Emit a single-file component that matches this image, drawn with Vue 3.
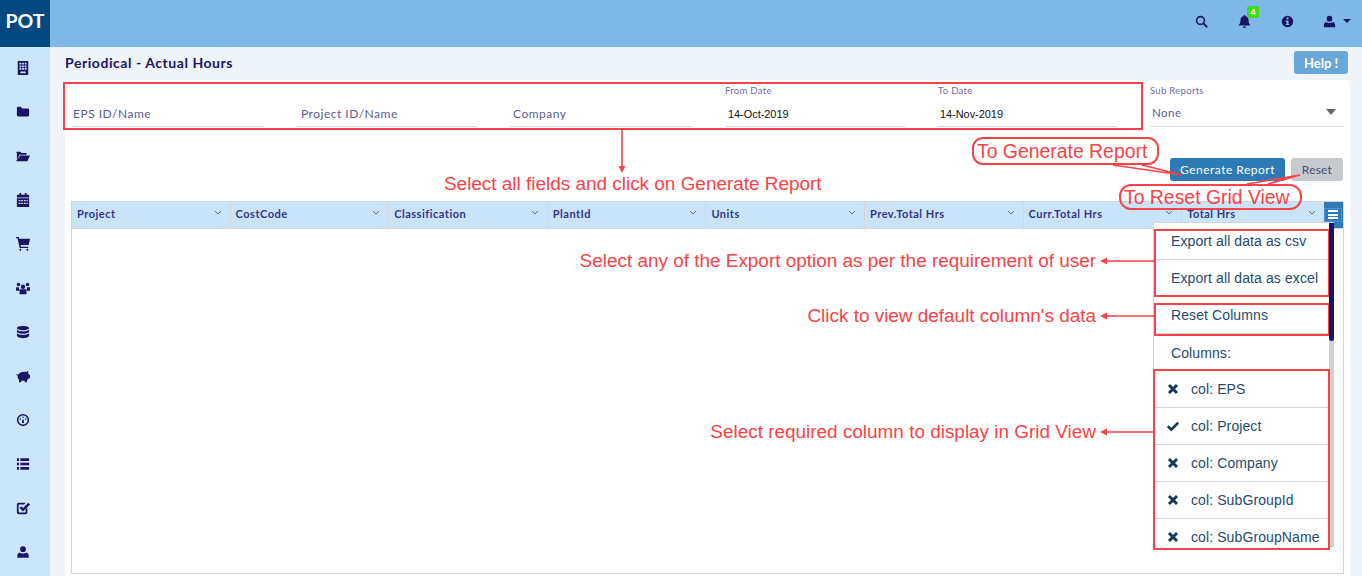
<script setup>
const sideIcons = [
  { d: 'M2 0h12v16H2zM4 2v2h2V2zm3 0v2h2V2zm3 0v2h2V2zM4 5v2h2V5zm3 0v2h2V5zm3 0v2h2V5zM4 8v2h2V8zm3 0v2h2V8zm3 0v2h2V8zM5 12v2h6v-2z' },
  { d: 'M1 3.5A1.5 1.5 0 0 1 2.500 2h3l1.500 2h6.500A1.500 1.500 0 0 1 15 5.500v6a1.500 1.500 0 0 1-1.500 1.500h-11A1.500 1.500 0 0 1 1 11.500z' },
  { d: 'M0 4a1 1 0 0 1 1-1h4l1.500 1.500H12V6.500H4L1 12V4zM4.500 7.500H16l-3 6.500H0z' },
  { d: 'M1 2h3V0h2v2h4V0h2v2h3v3H1zM1 6h14v10H1zm2 2v1.500h2V8zm3 0v1.500h2V8zm3 0v1.500h2V8zm3 0v1.500h1.500V8zM3 11v1.500h2V11zm3 0v1.500h2V11zm3 0v1.500h2V11zm3 0v1.500h1.500V11z' },
  { d: 'M0 0h3l.6 2H16l-1.500 7H5.200l.4 2H14v1.500H4.200L1.800 1.500H0zM5 13.500a1 1 0 1 0 .01 0zm8 0a1 1 0 1 0 .01 0z' },
  { d: 'M8 4a2.500 2.500 0 1 1 0 5 2.500 2.500 0 0 1 0-5zM2.800 2a2 2 0 1 1 0 4 2 2 0 0 1 0-4zm10.400 0a2 2 0 1 1 0 4 2 2 0 0 1 0-4zM0 7h3.500v4H0zm12.500 0H16v4h-3.500zM4 9.500h8V15H4z' },
  { d: 'M8 1c3.800 0 7 1 7 2.500S11.800 6 8 6 1 5 1 3.500 4.200 1 8 1zM1 5.500C2.500 7 5 7.300 8 7.300s5.500-.3 7-1.800v2C15 9 11.800 10 8 10S1 9 1 7.500zm0 4C2.500 11 5 11.300 8 11.300s5.500-.3 7-1.800v2.500C15 13.500 11.800 15 8 15s-7-1.500-7-3z' },
  { d: 'M3 6c1-2 3.500-3 6-3 1 0 2 .2 2.800.5L14 2v3.500L16 7v3.500h-1.500L12.500 13v2h-2.500v-1.500H6V15H3.500v-2.500C2 11 1.600 9 2 7.500 1 7.500 0 7 0 6c.8.500 2 .5 3 0z' },
  { d: 'M8 1a7 7 0 1 1 0 14A7 7 0 0 1 8 1zm0 1.800a5.200 5.200 0 1 0 0 10.400A5.200 5.200 0 0 0 8 2.800zM8 4a.8.8 0 1 1 0 1.600A.8.8 0 0 1 8 4zM5 6a.8.8 0 1 1 0 1.600A.8.8 0 0 1 5 6zm6 0a.8.8 0 1 1 0 1.600A.8.8 0 0 1 11 6zM7.500 7h1l.5 2.500A1.300 1.300 0 1 1 7 9.500z' },
  { d: 'M1 1.500h2.500v3H1zm4 0h10v3H5zM1 6.500h2.500v3H1zm4 0h10v3H5zM1 11.500h2.500v3H1zm4 0h10v3H5z' },
  { d: 'M3 2h8l-1.800 2H3.500a.5.5 0 0 0-.5.500v8a.5.5 0 0 0 .5.500h7a.5.5 0 0 0 .5-.5V9.500l2-2V13a2 2 0 0 1-2 2H3a2 2 0 0 1-2-2V4a2 2 0 0 1 2-2zm11 0l2 2-8 8-4-4 2-2 2 2z' },
  { d: 'M8 1.500a3.300 3.300 0 1 1 0 6.600 3.300 3.300 0 0 1 0-6.600zM3.800 8.500c1 .8 2.600 1.200 4.200 1.200s3.200-.4 4.200-1.200c1.200.6 2.300 2 2.300 4v2h-13v-2c0-2 1.100-3.400 2.300-4z' }
]

const fields = [
  { text: 'EPS ID/Name', cls: 'p1' },
  { text: 'Project ID/Name', cls: 'p4' },
  { text: 'Company', cls: 'p3' },
  { label: 'From Date', value: '14-Oct-2019' },
  { label: 'To Date', value: '14-Nov-2019' }
]

const columns = ['Project', 'CostCode', 'Classification', 'PlantId', 'Units', 'Prev.Total Hrs', 'Curr.Total Hrs', 'Total Hrs']

const menuRows = [
  { text: 'Export all data as csv', cls: 'lined' },
  { text: 'Export all data as excel', cls: 'lined' },
  { text: 'Reset Columns', cls: 'lined' },
  { text: 'Columns:', cls: '' },
  { text: 'col: EPS', icon: 'x' },
  { text: 'col: Project', icon: 'check' },
  { text: 'col: Company', icon: 'x' },
  { text: 'col: SubGroupId', icon: 'x' },
  { text: 'col: SubGroupName', icon: 'x' }
]

const notes = [
  { text: 'Select all fields and click on Generate Report', cls: 'n-fields' },
  { text: 'Select any of the Export option as per the requirement of user', cls: 'n-export' },
  { text: "Click to view default column's data", cls: 'n-reset' },
  { text: 'Select required column to display in Grid View', cls: 'n-cols' }
]
</script>

<template>
  <div class="shell">
    <header class="topbar">
      <div class="logo">POT</div>
      <div class="top-actions">
        <svg class="top-icon" viewBox="0 0 16 16"><circle cx="6.800" cy="6.800" r="4.800" fill="none" stroke="#1a1464" stroke-width="2" /><path d="M10.300 10.300L15 15" stroke="#1a1464" stroke-width="2.400" /></svg>
        <span class="bell">
          <svg class="top-icon" viewBox="0 0 16 16"><path fill="#1a1464" d="M8 0a1 1 0 0 1 1 1.200C11.500 1.800 13 3.800 13 6.500c0 3.500 1 5 2.500 6.500h-15C2 11.500 3 10 3 6.500 3 3.800 4.500 1.800 7 1.200A1 1 0 0 1 8 0zM6 14h4a2 2 0 0 1-4 0z" /></svg>
          <span class="badge">4</span>
        </span>
        <svg class="top-icon info" viewBox="0 0 16 16"><path fill="#1a1464" fill-rule="evenodd" d="M8 1a7 7 0 1 1 0 14A7 7 0 0 1 8 1zM6.800 3v2.200h2.400V3zM5.800 6.800v1.400h1V11h-1v1.400h4.400V11h-1V6.800z" /></svg>
        <span class="user">
          <svg class="top-icon" viewBox="0 0 16 16"><path fill="#1a1464" d="M8 1a3.500 3.500 0 1 1 0 7 3.500 3.500 0 0 1 0-7zM3.500 8.500C4.700 9.400 6.200 9.800 8 9.800s3.300-.4 4.500-1.300c1.300.6 2.500 2 2.500 4.200V15H1v-2.300c0-2.200 1.200-3.600 2.500-4.200z" /></svg>
          <i class="user-caret"></i>
        </span>
      </div>
    </header>

    <div class="below">
      <nav class="sidebar">
        <div v-for="(icon, i) in sideIcons" :key="i" class="side-item">
          <svg viewBox="0 0 16 16" class="side-icon"><path fill="#1a1464" fill-rule="evenodd" :d="icon.d" /></svg>
        </div>
      </nav>

      <main class="content">
        <div class="title-row">
          <h1>Periodical - Actual Hours</h1>
          <button class="help">Help !</button>
        </div>

        <section class="card">
          <div class="filters">
            <div v-for="f in fields" :key="f.text || f.label" class="field">
              <span class="small-label">{{ f.label }}</span>
              <span v-if="f.text" class="field-text" :class="f.cls">{{ f.text }}</span>
              <span v-else class="field-date">{{ f.value }}</span>
            </div>
            <div class="field sub">
              <span class="small-label">Sub Reports</span>
              <span class="field-text none">None <i class="select-caret"></i></span>
            </div>
          </div>

          <div class="actions">
            <button class="generate">Generate Report</button>
            <button class="reset">Reset</button>
          </div>

          <div class="grid">
            <div class="grid-head">
              <div v-for="c in columns" :key="c" class="col">
                <span>{{ c }}</span>
                <svg class="chev" viewBox="0 0 8 5"><path d="M1 1l3 3 3-3" fill="none" stroke="#5f6f9f" stroke-width="1" /></svg>
              </div>
              <div class="menu-btn"><span class="burger"><i></i><i></i><i></i></span></div>
            </div>
            <div class="grid-body"></div>

            <div class="menu">
              <div v-for="r in menuRows" :key="r.text" class="menu-row" :class="[r.cls, { coln: r.icon }]">
                <svg v-if="r.icon === 'x'" class="mark" viewBox="0 0 12 12"><path d="M2 2l8 8M10 2l-8 8" stroke="#17375e" stroke-width="3" /></svg>
                <svg v-if="r.icon === 'check'" class="mark" viewBox="0 0 12 12"><path d="M0.800 6.200l3.400 3.400 7-7" fill="none" stroke="#17375e" stroke-width="2.600" /></svg>
                {{ r.text }}
              </div>
              <div class="thumb"></div>
            </div>
          </div>
        </section>
      </main>
    </div>

    <div class="overlay">
      <svg class="lines" width="1362" height="576" viewBox="0 0 1362 576">
        <g fill="none" stroke="#f84348" stroke-width="1.600">
          <path d="M622 128V168" />
          <path d="M1104 261H1154M1104 316H1154M1104 432H1153" />
          <path d="M1113 165L1182 175L1142 165" />
          <path d="M1247 184L1300 175L1268 184" />
        </g>
        <g fill="#f84348">
          <path d="M618.500 166h7L622 173z" />
          <path d="M1100 261l7-3.500v7zM1100 316l7-3.500v7zM1100 432l7-3.500v7z" />
        </g>
      </svg>
      <div class="rbox b-filters"></div>
      <div class="rbox b-export"></div>
      <div class="rbox b-reset"></div>
      <div class="rbox b-cols"></div>
      <div class="callout c-gen">To Generate Report</div>
      <div class="callout c-res">To Reset Grid View</div>
      <div v-for="n in notes" :key="n.cls" class="note" :class="n.cls">{{ n.text }}</div>
    </div>
  </div>
</template>

<style>
html, body { margin: 0; overflow: hidden; }
</style>

<style scoped>
.shell {
  position: relative;
  width: 1362px;
  height: 576px;
  overflow: hidden;
  font-family: Lato, "Liberation Sans", sans-serif;
  background: #eff4f8;
}
.topbar {
  display: flex;
  justify-content: space-between;
  height: 47px;
  background: #7db8e8;
}
.logo {
  width: 50px;
  background: #044a80;
  color: #fff;
  font-size: 19.500px;
  font-weight: 700;
  line-height: 42px;
  text-align: center;
}
.top-actions {
  display: flex;
  align-items: center;
  padding: 0 11px 5px 0;
}
.top-icon { display: block; width: 13px; height: 13px; }
.top-actions > .top-icon:first-child { margin-right: 30px; }
.bell { position: relative; margin-right: 30px; }
.badge {
  position: absolute;
  left: 9px;
  top: -9px;
  width: 12px;
  height: 12px;
  background: #3ddc1f;
  border-radius: 2px;
  color: #fff;
  font: 700 9px/12px "Liberation Sans", sans-serif;
  text-align: center;
}
.info { margin-right: 29px; }
.user { display: flex; align-items: center; gap: 7px; }
.user-caret {
  border: 4px solid transparent;
  border-top: 4px solid #1a1464;
  border-bottom: 0;
}
.below { display: flex; height: 529px; }
.sidebar {
  flex: 0 0 50px;
  background: #cbe5f9;
}
.side-item {
  display: flex;
  align-items: center;
  justify-content: center;
  height: 44px;
  padding: 0 4px 2px 0;
  box-sizing: border-box;
}
.side-icon { width: 14px; height: 14px; display: block; }
.content { flex: 1; padding: 4px 12px 0 15px; min-width: 0; }
.title-row {
  display: flex;
  align-items: center;
  justify-content: space-between;
  height: 23px;
  padding-right: 2px;
}
h1 {
  margin: 0;
  font-size: 14px;
  font-weight: 700;
  color: #1a1464;
  letter-spacing: 0.55px;
}
.help {
  width: 54px;
  height: 23px;
  border: 0;
  border-radius: 3px;
  background: #69a7d8;
  color: #fff;
  font: 700 13px Lato, sans-serif;
  padding: 0;
}
.card {
  margin-top: 6px;
  background: #fff;
  border-radius: 5px;
  padding: 0 6px;
  height: 520px;
}
.filters {
  display: grid;
  grid-template-columns: 225px 213px 215px 213px 212px 194px;
  padding-top: 5px;
  margin-left: 1px;
}
.field {
  display: flex;
  flex-direction: column;
  height: 42px;
  box-sizing: border-box;
  margin-right: 33px;
  border-bottom: 1px solid #dcdcdc;
}
.field.sub { margin-right: 0; }
.small-label {
  height: 12px;
  font-size: 9.500px;
  line-height: 12px;
  color: #6f6ea8;
  letter-spacing: 0.3px;
}
.field-text {
  margin-top: 9px;
  font-size: 12px;
  line-height: 16px;
  color: #5b5a96;
  letter-spacing: 0.5px;
}
.p1 { padding-left: 1px; }
.p4 { padding-left: 4px; }
.p3 { padding-left: 3px; }
.none { display: flex; justify-content: space-between; align-items: center; padding-left: 2px; margin-top: 8px; font-size: 11.500px; }
.select-caret {
  border: 5px solid transparent;
  border-top: 6px solid #666;
  border-bottom: 0;
  margin-right: 8px;
  margin-top: -3px;
}
.field-date {
  margin-top: 9px;
  padding-left: 3px;
  font: 10.900px/16px "Liberation Sans", sans-serif;
  color: #111;
}
.field:nth-child(5) .field-date { padding-left: 2px; }
.actions {
  display: flex;
  justify-content: flex-end;
  gap: 6px;
  margin-top: 31px;
  padding-right: 1px;
}
.actions button {
  height: 23px;
  border: 0;
  border-radius: 3px;
  font: 12px Lato, sans-serif;
  padding: 0;
}
.generate { width: 115px; background: #2e7ab5; color: #fff; letter-spacing: 0.5px; }
.reset { width: 52px; background: #c6c9cd; color: #4b4b72; letter-spacing: 0.2px; }
.grid {
  position: relative;
  margin-top: 20px;
  height: 373px;
  box-sizing: border-box;
  border: 1px solid #d6d6d6;
  display: flex;
  flex-direction: column;
}
.grid-head {
  display: flex;
  height: 26px;
  flex: none;
  background: #c9e4f8;
  border-bottom: 1px solid #d6d6d6;
}
.col {
  flex: 0 0 158.600px;
  box-sizing: border-box;
  display: flex;
  align-items: center;
  justify-content: space-between;
  padding: 0 8px 3px 5px;
  border-right: 1px solid #d6d6d6;
  font-size: 11px;
  font-weight: 700;
  color: #34358a;
  letter-spacing: 0.5px;
}
.col:nth-child(8) { flex-basis: 141.800px; border-right: 0; }
.chev { width: 8px; height: 5px; margin-top: -3px; }
.menu-btn {
  flex: 1;
  min-width: 0;
  background: #2e7ab5;
  display: flex;
  align-items: center;
  justify-content: center;
}
.burger {
  box-sizing: border-box;
  width: 18px;
  height: 14px;
  display: flex;
  flex-direction: column;
  justify-content: center;
  gap: 1.500px;
  padding: 0 3px;
  border: 1px solid #4a90d9;
  margin-top: -1px;
}
.burger i { display: block; height: 2px; background: #fff; }
.grid-body { flex: 1; background: #fff; }
.menu {
  position: absolute;
  left: 1081px;
  top: 20px;
  width: 181px;
  height: 325px;
  box-sizing: border-box;
  overflow: hidden;
  background: #fff;
  border-left: 1px solid #d6d6d6;
  border-top: 1px solid #d6d6d6;
  font: 14px "Liberation Sans", sans-serif;
  letter-spacing: 0.1px;
  color: #264a6e;
}
.menu::after {
  content: "";
  position: absolute;
  right: 0;
  top: 0;
  bottom: 0;
  width: 5px;
  background: #d0d0d0;
}
.menu-row {
  height: 37px;
  box-sizing: border-box;
  padding-left: 17px;
  margin-right: 5px;
  display: flex;
  align-items: center;
  white-space: nowrap;
  flex: none;
}
.lined { border-bottom: 1px solid #d6d6d6; }
.coln { padding-left: 13px; gap: 12px; border-bottom: 1px solid #d6d6d6; }
.mark { width: 12px; height: 12px; flex: none; }
.thumb {
  position: absolute;
  z-index: 1;
  right: 0;
  top: 0;
  width: 5px;
  height: 118px;
  background: #1a1464;
  border-radius: 0 0 3px 3px;
}

.overlay { position: absolute; inset: 0; pointer-events: none; }
.lines { position: absolute; left: 0; top: 0; }
.rbox {
  position: absolute;
  box-sizing: border-box;
  border: 2px solid #f84348;
}
.b-filters { left: 63px; top: 82px; width: 1080px; height: 48px; }
.b-export { left: 1154px; top: 229px; width: 176px; height: 68px; }
.b-reset { left: 1154px; top: 303px; width: 176px; height: 33px; }
.b-cols { left: 1153px; top: 369px; width: 177px; height: 181px; }
.callout {
  position: absolute;
  box-sizing: border-box;
  border: 2px solid #f84348;
  color: #f84348;
  font: 19.400px "Liberation Sans", sans-serif;
  display: flex;
  align-items: center;
  white-space: nowrap;
  padding-left: 3px;
}
.c-gen { left: 972px; top: 137px; width: 187px; height: 28px; border-radius: 11px; }
.c-res { left: 1119px; top: 184px; width: 183px; height: 26px; border-radius: 12px; }
.note {
  position: absolute;
  color: #f84348;
  font: 18.930px/22px "Liberation Sans", sans-serif;
  white-space: nowrap;
}
.n-fields { left: 444px; top: 173px; }
.n-export { right: 266px; top: 250px; }
.n-reset { right: 266px; top: 305px; }
.n-cols { right: 266px; top: 421px; }
</style>
